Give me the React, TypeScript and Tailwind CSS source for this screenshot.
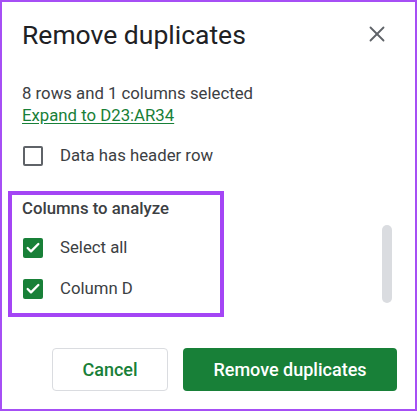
import { X, Check } from 'lucide-react'

function Box({ checked, label }: { checked: boolean; label: string }) {
  return (
    <div className="flex items-center h-[21px]">
      {checked ? (
        <span className="w-[20px] h-[20px] rounded-[2px] bg-[#188038] flex items-center justify-center">
          <Check size={16} strokeWidth={3.5} className="text-white" />
        </span>
      ) : (
        <span className="w-[20px] h-[20px] rounded-[2px] border-2 border-[#5f6368]" />
      )}
      <span className="ml-[17px] text-[16.75px] text-[#3c4043]">{label}</span>
    </div>
  )
}

export default function App() {
  return (
    <div
      className="w-[417px] h-[411px] border-2 border-[#a64ff5] bg-white relative"
      style={{ fontFamily: 'Roboto, "Liberation Sans", sans-serif' }}
    >
      <div className="flex items-start justify-between pl-[20px] pr-[25px] pt-[17px]">
        <h1 className="text-[26.5px] leading-[32px] text-[#202124]">Remove duplicates</h1>
        <X size={26} strokeWidth={1.7} className="text-[#5f6368] mt-[2px]" />
      </div>

      <div className="pl-[20px] mt-[31px] text-[16.75px] leading-[22px] text-[#3c4043]">
        8 rows and 1 columns selected
      </div>
      <div className="pl-[20px] text-[16.75px] leading-[22px] text-[#188038] underline underline-offset-2">
        Expand to D23:AR34
      </div>

      <div className="pl-[21px] mt-[19px]">
        <Box checked={false} label="Data has header row" />
      </div>

      <div className="flex mt-[25px]">
        <div className="ml-[6px] w-[216px] h-[126px] border-4 border-[#a445f5] pl-[10px] pt-[2px]">
          <div className="text-[16.75px] leading-[22px] font-medium text-[#3c4043]">Columns to analyze</div>
          <div className="mt-[18px] pl-[1px] flex flex-col gap-[20px]">
            <Box checked label="Select all" />
            <Box checked label="Column D" />
          </div>
        </div>
        <div className="ml-auto mr-[23px] mt-[34px] w-[10px] h-[78px] rounded-full bg-[#dadce0]" />
      </div>

      <div className="flex justify-end gap-[15px] pr-[18px] mt-[31px]">
        <button className="w-[116px] h-[43px] rounded-[4px] border border-[#dadce0] text-[#188038] text-[18px] font-medium">
          Cancel
        </button>
        <button className="w-[214px] h-[43px] rounded-[4px] bg-[#188038] text-white text-[18px] font-medium">
          Remove duplicates
        </button>
      </div>
    </div>
  )
}
